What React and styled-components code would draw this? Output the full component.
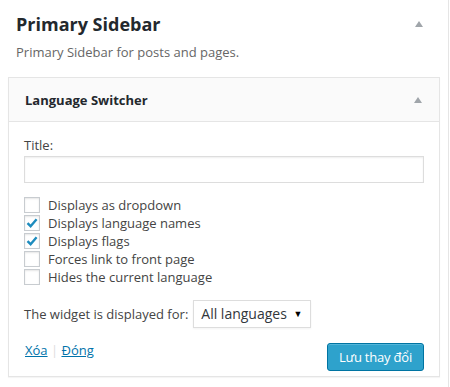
import React from 'react'
import styled, { createGlobalStyle } from 'styled-components'

const Global = createGlobalStyle`
  body {
    margin: 0;
    background: #fff;
    font-family: "Open Sans", "Liberation Sans", sans-serif;
    color: #444;
  }
`

const Page = styled.div`
  width: 448px;
  height: 387px;
  border-right: 1px solid #e5e5e5;
  overflow: hidden;
`

const SidebarHead = styled.div`
  display: flex;
  justify-content: space-between;
  align-items: center;
  padding: 12px 25px 0 16px;
`

const SidebarTitle = styled.h2`
  margin: 0;
  font-size: 18px;
  line-height: 24px;
  font-weight: 700;
  color: #23282d;
`

const Arrow = styled.span`
  width: 0;
  height: 0;
  border-left: 4px solid transparent;
  border-right: 4px solid transparent;
  border-bottom: 6px solid #a0a5aa;
`

const Description = styled.p`
  margin: 7px 0 0;
  padding: 0 16px;
  font-size: 13px;
  line-height: 18px;
  color: #666;
`

const Card = styled.div`
  margin: 16px 8px 0;
  border: 1px solid #e5e5e5;
  box-shadow: 0 1px 1px rgba(0, 0, 0, 0.04);
  background: #fff;
`

const CardHead = styled.div`
  display: flex;
  justify-content: space-between;
  align-items: center;
  height: 43px;
  padding: 0 17px 0 16px;
  background: #fafafa;
  border-bottom: 1px solid #e5e5e5;
`

const CardTitle = styled.h3`
  margin: 0;
  font-size: 13px;
  font-weight: 700;
  color: #23282d;
`

const CardBody = styled.div`
  padding: 14px 15px 5px;
  font-size: 13px;
  line-height: 18px;
`

const Label = styled.label`
  display: block;
  color: #444;
  margin-bottom: 2px;
`

const TextInput = styled.input`
  display: block;
  width: 100%;
  box-sizing: border-box;
  height: 27px;
  border: 1px solid #ddd;
  box-shadow: inset 0 1px 2px rgba(0, 0, 0, 0.07);
  outline: none;
  background: #fff;
`

const Options = styled.div`
  margin-top: 13px;
  display: flex;
  flex-direction: column;
`

const OptionRow = styled.label`
  display: flex;
  align-items: center;
  height: 18px;
  gap: 8px;
  color: #444;
`

const Box = styled.span`
  width: 16px;
  height: 16px;
  box-sizing: border-box;
  border: 1px solid #c8ccd0;
  background: #fff;
  box-shadow: inset 0 1px 2px rgba(0, 0, 0, 0.1);
  display: flex;
  align-items: center;
  justify-content: center;
`

const SelectRow = styled.div`
  margin-top: 14px;
  display: flex;
  align-items: center;
  gap: 5px;
`

const FakeSelect = styled.div`
  width: 118px;
  height: 28px;
  box-sizing: border-box;
  border: 1px solid #ddd;
  display: flex;
  align-items: center;
  justify-content: space-between;
  padding: 0 8px 0 7px;
  font-size: 14px;
  color: #32373c;
  box-shadow: 0 1px 2px rgba(0, 0, 0, 0.05);
`

const Caret = styled.span`
  font-size: 9px;
  color: #000;
`

const Footer = styled.div`
  margin-top: 13px;
  display: flex;
  justify-content: space-between;
  align-items: flex-start;
`

const Links = styled.div`
  color: #ddd;
  padding-left: 1px;
`

const Link = styled.a`
  color: #0073aa;
  text-decoration: underline;
`

const Button = styled.button`
  margin-top: 2px;
  height: 28px;
  width: 97px;
  box-sizing: border-box;
  background: #2ea2cc;
  border: 1px solid #0074a2;
  border-radius: 3px;
  box-shadow: inset 0 1px 0 rgba(120, 200, 230, 0.5);
  color: #fff;
  font-family: inherit;
  font-size: 13px;
  letter-spacing: -0.2px;
  white-space: nowrap;
  padding: 0;
`

const Check = () => (
  <svg width="14" height="14" viewBox="0 0 14 14">
    <path d="M2.5 7.2 L5.6 10.2 L11.6 3.2" fill="none" stroke="#1e8cbe" strokeWidth="2.4" />
  </svg>
)

const options = [
  { label: 'Displays as dropdown', checked: false },
  { label: 'Displays language names', checked: true },
  { label: 'Displays flags', checked: true },
  { label: 'Forces link to front page', checked: false },
  { label: 'Hides the current language', checked: false },
]

const App = () => {
  return (
    <Page>
      <Global />
      <SidebarHead>
        <SidebarTitle>Primary Sidebar</SidebarTitle>
        <Arrow />
      </SidebarHead>
      <Description>Primary Sidebar for posts and pages.</Description>
      <Card>
        <CardHead>
          <CardTitle>Language Switcher</CardTitle>
          <Arrow />
        </CardHead>
        <CardBody>
          <Label>Title:</Label>
          <TextInput type="text" />
          <Options>
            {options.map(o => (
              <OptionRow key={o.label}>
                <Box>{o.checked && <Check />}</Box>
                {o.label}
              </OptionRow>
            ))}
          </Options>
          <SelectRow>
            The widget is displayed for:
            <FakeSelect>
              All languages <Caret>▼</Caret>
            </FakeSelect>
          </SelectRow>
          <Footer>
            <Links>
              <Link href="#">Xóa</Link> | <Link href="#">Đóng</Link>
            </Links>
            <Button>Lưu thay đổi</Button>
          </Footer>
        </CardBody>
      </Card>
    </Page>
  )
}

export default App
